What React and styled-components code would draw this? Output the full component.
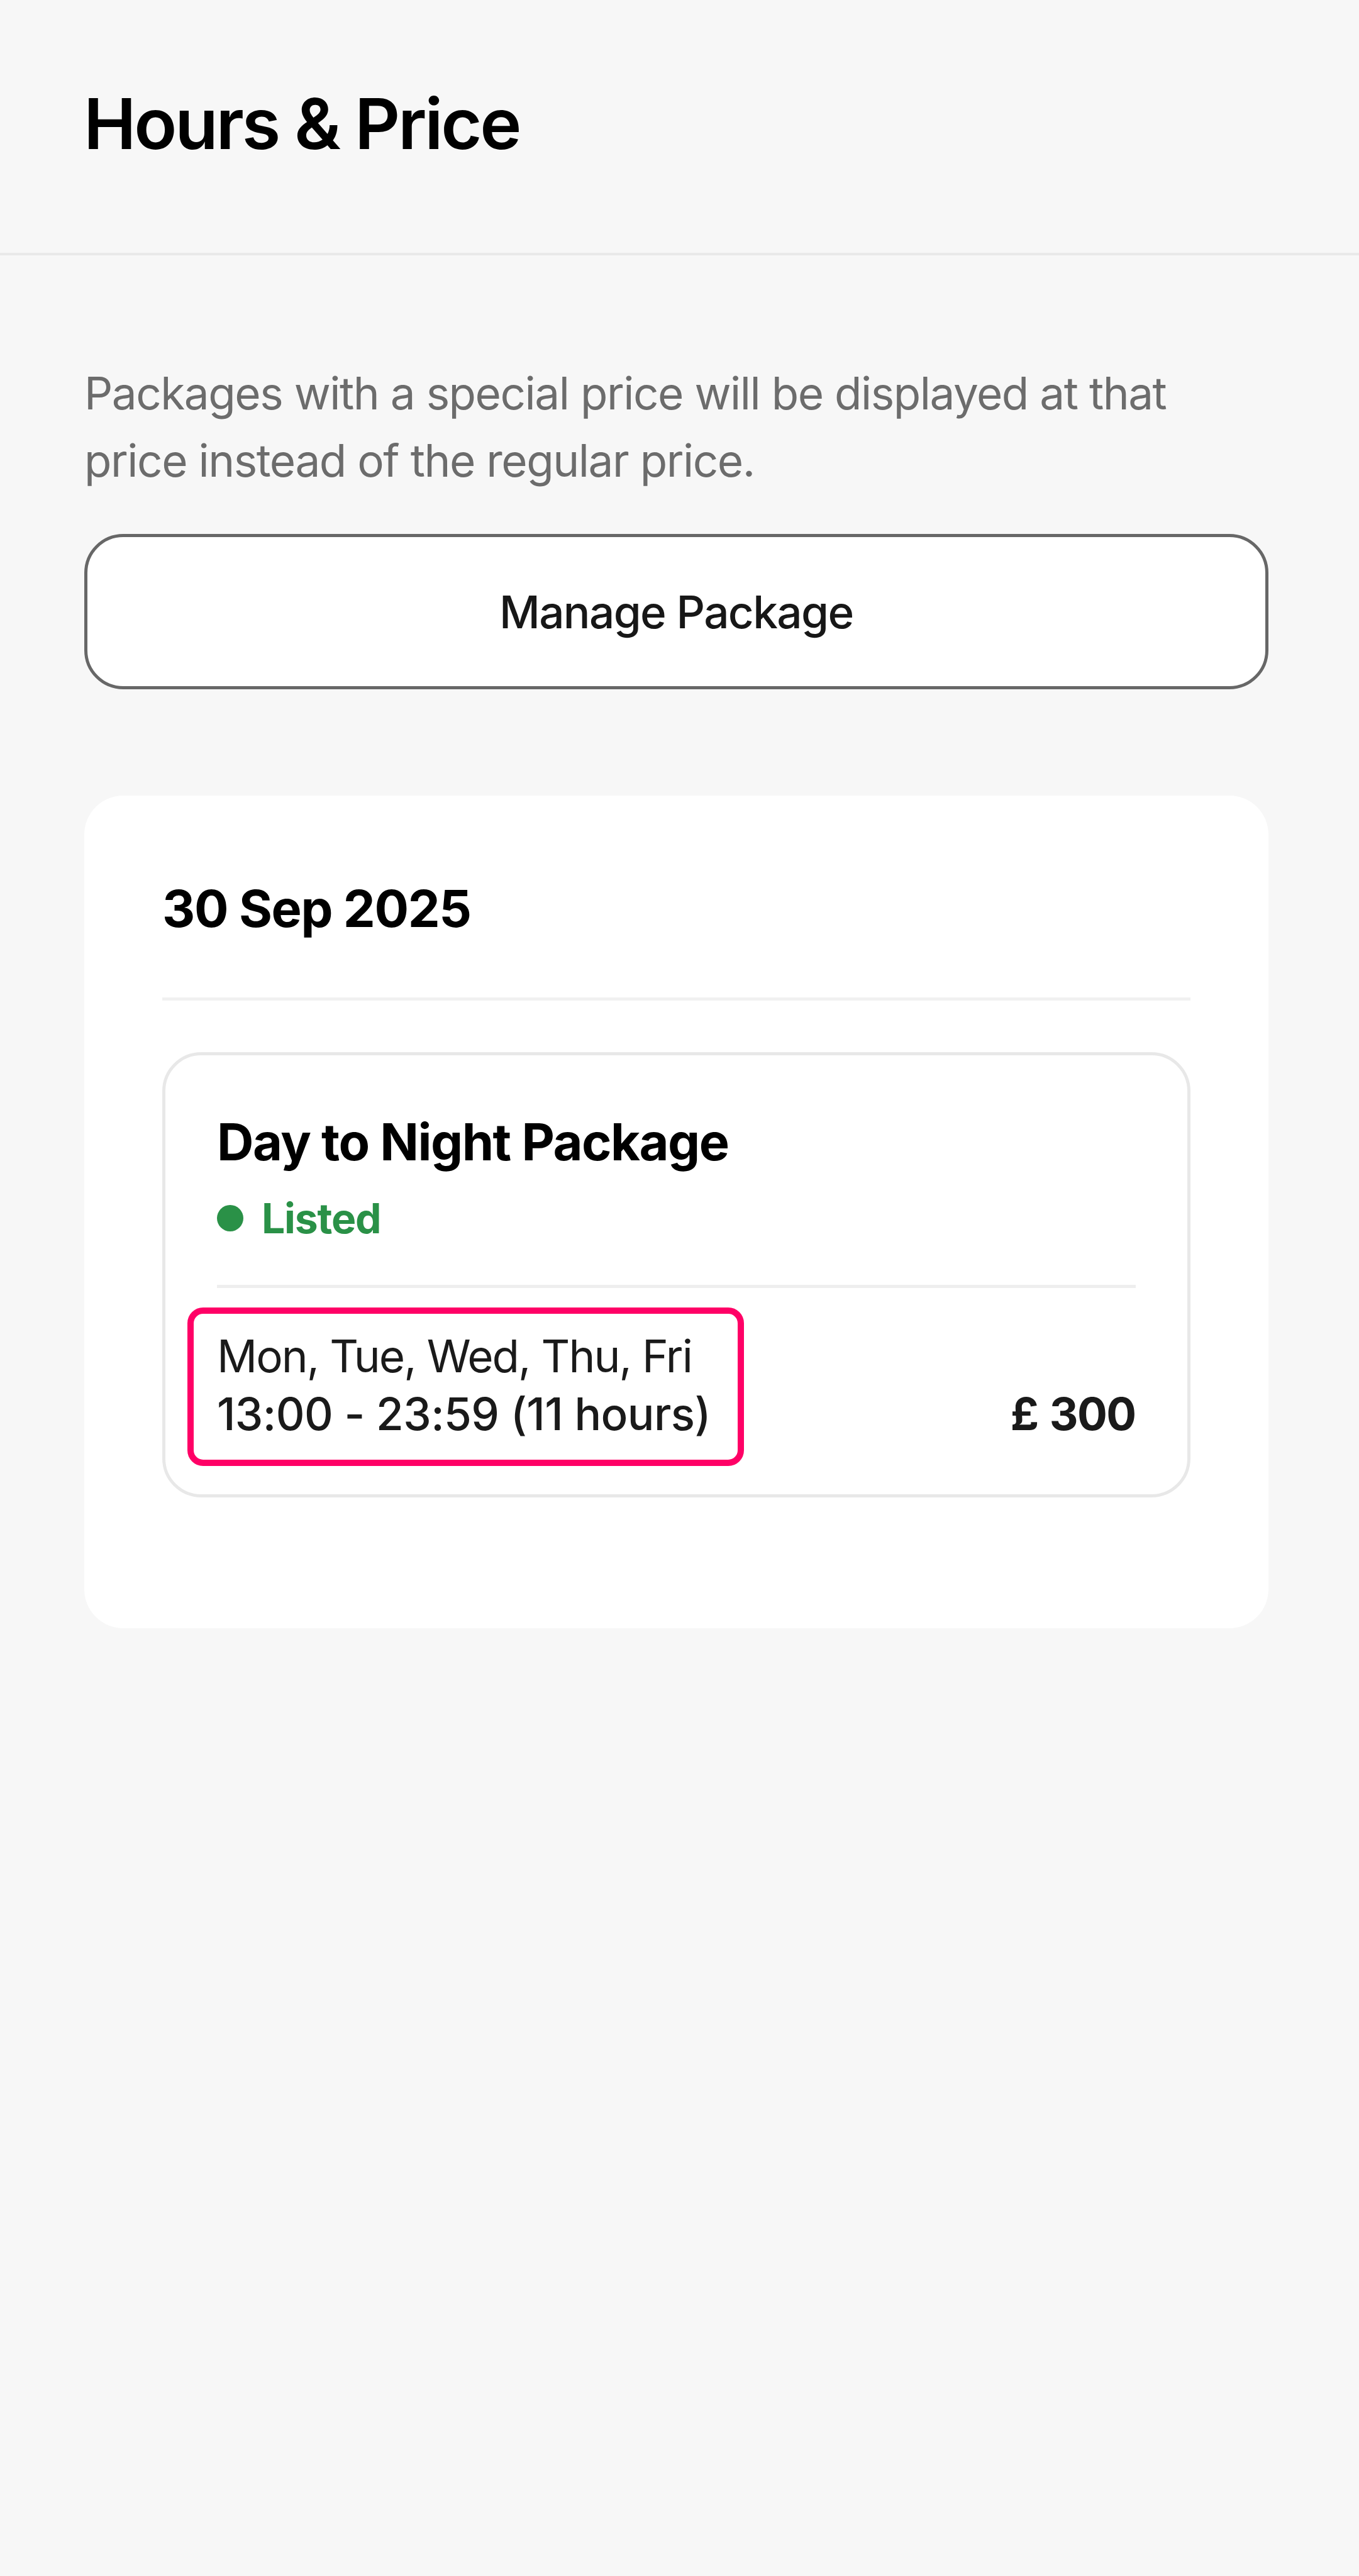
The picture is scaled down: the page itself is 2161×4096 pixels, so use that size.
import React from "react";
import styled, { createGlobalStyle } from "styled-components";

const GlobalStyle = createGlobalStyle`
    * { box-sizing: border-box; }
    body {
        margin: 0;
        background: #f7f7f7;
        font-family: Inter, "Liberation Sans", sans-serif;
        color: #000;
    }
`;

const Page = styled.div`
    min-height: 4096px;
    background: #f7f7f7;
`;

const Header = styled.header`
    height: 406px;
    padding: 128px 133px 0;
    border-bottom: 4px solid #e9e9e9;
`;

const PageTitle = styled.h1`
    margin: 0;
    font-size: 112px;
    line-height: 136px;
    font-weight: 600;
    letter-spacing: -3.25px;
`;

const Content = styled.main`
    display: flex;
    flex-direction: column;
    padding: 165.5px 144.5px 0 134px;
`;

const Description = styled.p`
    margin: 0;
    font-size: 71px;
    line-height: 107.5px;
    letter-spacing: -1.48px;
    color: #6c6c6c;
    white-space: nowrap;
`;

const ManageButton = styled.button`
    height: 247px;
    margin: 62.5px 0 169px;
    border: 5px solid #676767;
    border-radius: 62px;
    background: #fff;
    color: #171717;
    font-family: inherit;
    font-size: 71px;
    font-weight: 500;
    letter-spacing: -1.6px;
`;

const DateCard = styled.section`
    padding: 131.5px 124px 208px;
    border-radius: 62px;
    background: #fff;
`;

const DateHeading = styled.h2`
    margin: 0 0 82px;
    padding-bottom: 92px;
    border-bottom: 5px solid #f1f1f1;
    font-size: 81px;
    line-height: 97px;
    font-weight: 700;
    letter-spacing: -1.4px;
`;

const PackageCard = styled.article`
    padding: 90px 82px 82px;
    border: 5px solid #e8e8e8;
    border-radius: 62px;
`;

const PackageHeader = styled.div`
    padding-bottom: 65.5px;
    border-bottom: 5px solid #eeeeee;
`;

const PackageName = styled.h3`
    margin: 0 0 33px;
    font-size: 81px;
    line-height: 97px;
    font-weight: 700;
    letter-spacing: -1.5px;
`;

const Status = styled.div`
    display: flex;
    align-items: center;
    gap: 29px;
    font-size: 66px;
    line-height: 79px;
    padding-bottom: 1px;
    font-weight: 700;
    letter-spacing: -1.2px;
    color: #2a9147;
`;

const StatusDot = styled.span`
    width: 42px;
    height: 42px;
    border-radius: 50%;
    background: #2a9147;
`;

const PackageRow = styled.div`
    display: flex;
    justify-content: space-between;
    align-items: flex-end;
    margin-top: 62px;
    font-size: 71px;
    line-height: 92px;
    color: #1a1a1a;
`;

const Schedule = styled.div`
    position: relative;
`;

const Days = styled.div`
    letter-spacing: -1.97px;
`;

const Hours = styled.div`
    font-weight: 500;
    letter-spacing: -0.6px;
`;

const Price = styled.div`
    font-weight: 700;
    letter-spacing: -1.6px;
    word-spacing: 3px;
`;

// outline laid over the schedule text
const Highlight = styled.div`
    position: absolute;
    left: -47px;
    top: -31px;
    width: 885px;
    height: 252px;
    border: 10px solid #ff0066;
    border-radius: 25px;
`;

const App = () => {
    return <>
        <GlobalStyle/>
        <Page>
            <Header>
                <PageTitle>Hours &amp; Price</PageTitle>
            </Header>
            <Content>
                <Description>
                    Packages with a special price will be displayed at that<br/>
                    price instead of the regular price.
                </Description>
                <ManageButton>Manage Package</ManageButton>
                <DateCard>
                    <DateHeading>30 Sep 2025</DateHeading>
                    <PackageCard>
                        <PackageHeader>
                            <PackageName>Day to Night Package</PackageName>
                            <Status><StatusDot/>Listed</Status>
                        </PackageHeader>
                        <PackageRow>
                            <Schedule>
                                <Days>Mon, Tue, Wed, Thu, Fri</Days>
                                <Hours>13:00 - 23:59 (11 hours)</Hours>
                                <Highlight/>
                            </Schedule>
                            <Price>£ 300</Price>
                        </PackageRow>
                    </PackageCard>
                </DateCard>
            </Content>
        </Page>
    </>
};

export default App;
